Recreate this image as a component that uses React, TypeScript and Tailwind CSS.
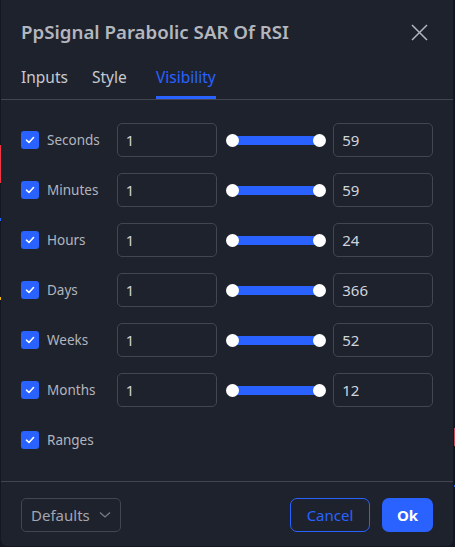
import React from "react";

const rows = [
  { label: "Seconds", max: "59" },
  { label: "Minutes", max: "59" },
  { label: "Hours", max: "24" },
  { label: "Days", max: "366" },
  { label: "Weeks", max: "52" },
  { label: "Months", max: "12" },
];

function Check() {
  return (
    <div className="w-[18px] h-[18px] rounded-[3px] bg-[#2962ff] flex items-center justify-center shrink-0">
      <svg width="12" height="12" viewBox="0 0 12 12" fill="none">
        <path d="M2.5 6.2 L5 8.5 L9.5 3.5" stroke="#ffffff" strokeWidth="1.6" strokeLinecap="round" strokeLinejoin="round" />
      </svg>
    </div>
  );
}

function Input({ value }: { value: string }) {
  return (
    <div className="w-[100px] h-[34px] rounded-[5px] border border-[#434651] flex items-center px-[8px] text-[15px] text-[#d1d4dc]">
      {value}
    </div>
  );
}

function Slider() {
  return (
    <div className="w-[100px] h-[34px] flex items-center px-[6px]">
      <div className="relative w-full h-[9px] bg-[#2962ff]">
        <div className="absolute left-[-6px] top-[-2px] w-[13px] h-[13px] rounded-full bg-white" />
        <div className="absolute right-[-6px] top-[-2px] w-[13px] h-[13px] rounded-full bg-white" />
      </div>
    </div>
  );
}

export default function App() {
  return (
    <div
      className="relative w-[455px] h-[547px] bg-[#131722] overflow-hidden"
      style={{ fontFamily: '"Noto Sans", "Open Sans", sans-serif' }}
    >
      <div className="absolute left-0 top-[145px] w-[1px] h-[38px] bg-[#f23645]" />
      <div className="absolute left-0 top-[218px] w-[1px] h-[3px] bg-[#2962ff]" />
      <div className="absolute left-0 top-[297px] w-[1px] h-[3px] bg-[#f5b51b]" />
      <div className="absolute right-0 top-[428px] w-[1px] h-[18px] bg-[#c8505a]" />
      <div className="absolute right-0 top-[485px] w-[1px] h-[2px] bg-[#2962ff]" />

      <div className="ml-[1px] w-[452px] h-[546px] bg-[#1e222d] rounded-b-[6px] flex flex-col">
        {/* header */}
        <div className="flex items-center justify-between pl-[20px] pr-[25px] pt-[19px] h-[46px]">
          <div className="text-[18.7px] font-semibold text-[#b4b6bd] leading-none">PpSignal Parabolic SAR Of RSI</div>
          <svg width="17" height="17" viewBox="0 0 17 17" fill="none">
            <path d="M1 1 L16 16 M16 1 L1 16" stroke="#b2b5be" strokeWidth="1.5" />
          </svg>
        </div>
        {/* tabs */}
        <div className="flex pl-[20px] border-b border-[#434651] mt-[12px]">
          <div className="w-[71px] text-[15.5px] text-[#c7c9cf] h-[41px] flex items-center pb-[2px]">Inputs</div>
          <div className="w-[64px] text-[15.5px] text-[#c7c9cf] h-[41px] flex items-center pb-[2px]">Style</div>
          <div className="text-[15.5px] text-[#2962ff] h-[41px] flex items-center border-b-[3px] border-[#2962ff] pt-[1px]">Visibility</div>
        </div>
        {/* content */}
        <div className="flex flex-col gap-[16px] px-[20px] pt-[23px]">
          {rows.map((r) => (
            <div key={r.label} className="flex items-center h-[34px]">
              <div className="flex items-center w-[96px] gap-[8px]">
                <Check />
                <span className="text-[13.5px] text-[#b2b5be]">{r.label}</span>
              </div>
              <Input value="1" />
              <div className="w-[10px]" />
              <Slider />
              <div className="w-[7px]" />
              <Input value={r.max} />
            </div>
          ))}
          <div className="flex items-center h-[34px] gap-[8px]">
            <Check />
            <span className="text-[13.5px] text-[#b2b5be]">Ranges</span>
          </div>
        </div>
        {/* footer */}
        <div className="mt-[24px] border-t border-[#434651] flex items-center justify-between px-[20px] pt-[16px]">
          <div className="w-[100px] h-[34px] rounded-[5px] border border-[#434651] flex items-center justify-between pl-[9px] pr-[9px]">
            <span className="text-[15px] text-[#a3a6af]">Defaults</span>
            <svg width="12" height="8" viewBox="0 0 12 8" fill="none">
              <path d="M1 1.5 L6 6 L11 1.5" stroke="#787b86" strokeWidth="1.3" />
            </svg>
          </div>
          <div className="flex gap-[12px]">
            <div className="w-[80px] h-[34px] rounded-[7px] border border-[#2962ff] flex items-center justify-center text-[15px] text-[#2962ff]">Cancel</div>
            <div className="w-[51px] h-[34px] rounded-[7px] bg-[#2962ff] flex items-center justify-center text-[15px] font-bold text-white">Ok</div>
          </div>
        </div>
      </div>
    </div>
  );
}
